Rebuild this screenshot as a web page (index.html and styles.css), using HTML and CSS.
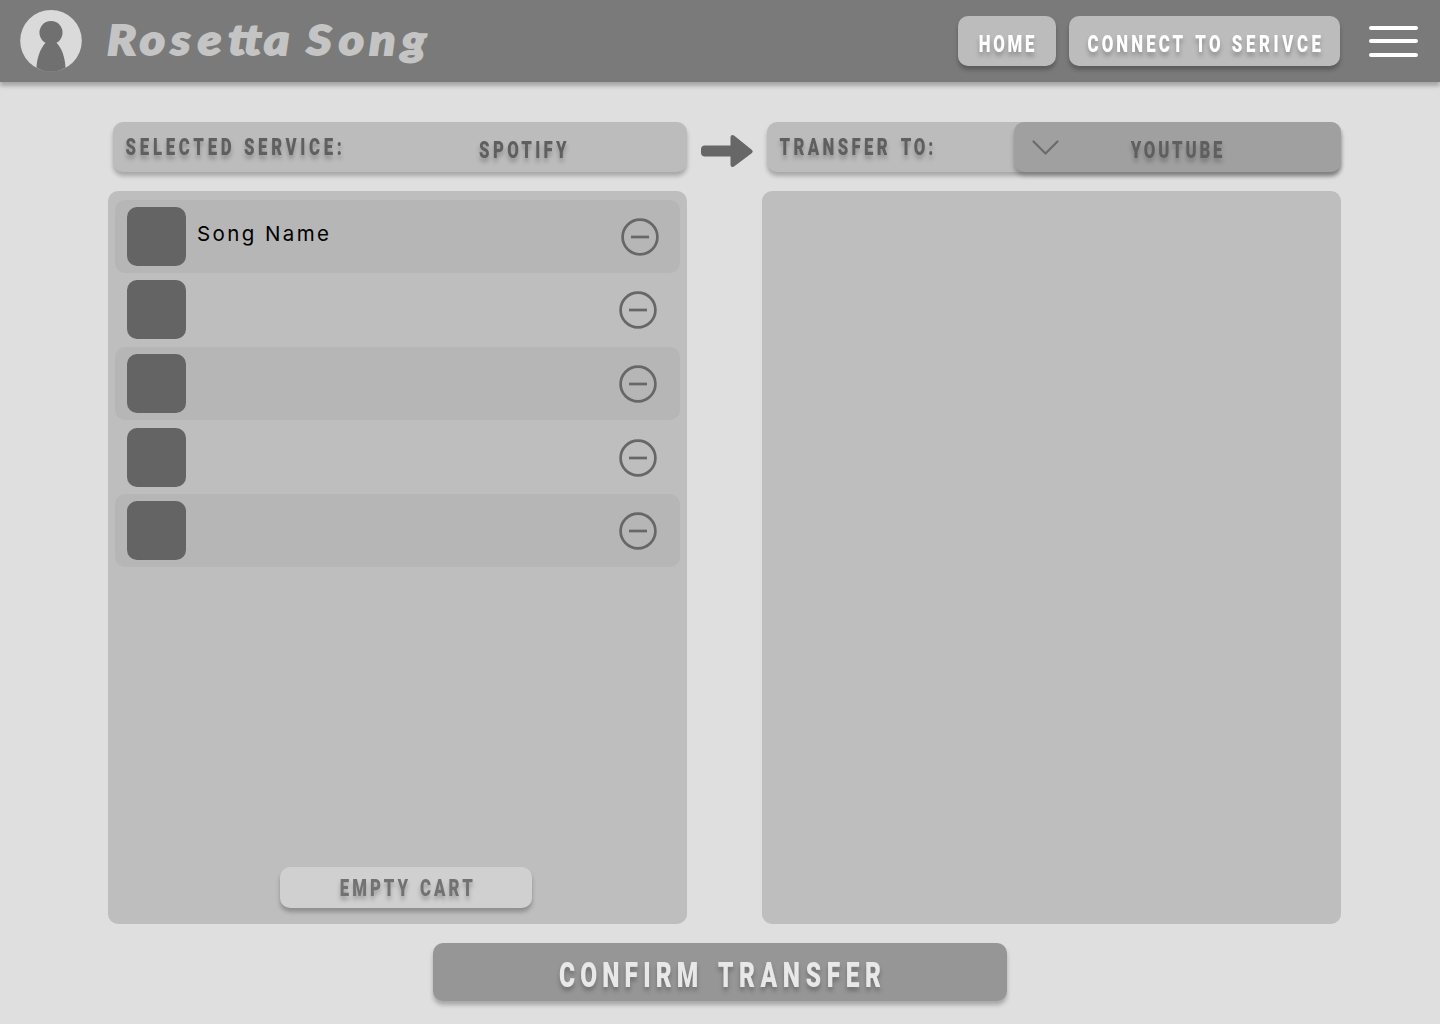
FILE: index.html
```html
<!DOCTYPE html>
<html lang="en">
<head>
<meta charset="utf-8">
<title>Rosetta Song</title>
<link rel="stylesheet" href="styles.css">
</head>
<body>
<header class="topbar">
  <svg class="logo" width="62" height="62" viewBox="0 0 62 62"><circle cx="31" cy="30.700" r="30.800" fill="#dadada"/><path d="M25.500 32.800A11.600 11.600 0 1 1 36.500 32.800C42.500 39 45 48 45.500 57.800A30.800 30.800 0 0 1 16.500 57.800C17 48 20 39 25.500 32.800Z" fill="#707070"/></svg>
  <svg class="brand" width="330" height="62"><text y="45" transform="scale(1.15 1)" x="0 28.500 55.500 79 105.500 119 136.500 148 173.500 201.500 228 256">Rosetta Song</text></svg>
  <nav class="nav">
    <a class="button home"><svg class="label" width="98" height="50"><text y="36" transform="scale(.7 1)"><tspan x="29.500" textLength="79.500">HOME</tspan></text></svg></a>
    <a class="button connect"><svg class="label" width="271" height="50"><text y="36" transform="scale(.7 1)"><tspan x="26.500" textLength="136.500">CONNECT</tspan><tspan x="180.500" textLength="36">TO</tspan><tspan x="232.500" textLength="127.500">SERIVCE</tspan></text></svg></a>
  </nav>
  <svg class="menu" width="49" height="32" viewBox="0 0 49 32"><path d="M2 3H47M2 16H47M2 30H47" stroke="#fff" stroke-width="4" stroke-linecap="round"/></svg>
</header>
<main class="page">
  <section class="services">
    <div class="button service"><svg class="label" width="574" height="50"><text y="33" transform="scale(.7 1)"><tspan x="18" textLength="151.500">SELECTED</tspan><tspan x="187" textLength="140">SERVICE:</tspan></text><text y="36" transform="scale(.7 1)"><tspan x="523" textLength="125">SPOTIFY</tspan></text></svg></div>
    <svg class="arrow" width="52" height="34" viewBox="0 0 52 34"><path d="M4 11.500H29.500V3Q30 0 33 1.500L51 16Q52.500 17.500 51 19L33 32.500Q30 34 29.500 31V22.500H4Q0 22.500 0 18.500V15.500Q0 11.500 4 11.500Z" fill="#676767"/></svg>
    <div class="button service target"><svg class="label" width="247" height="50"><text y="33" transform="scale(.7 1)"><tspan x="18" textLength="154.500">TRANSFER</tspan><tspan x="191" textLength="46.500">TO:</tspan></text></svg>
      <div class="button select">
        <svg class="chevron" width="27" height="15" viewBox="0 0 27 15"><path d="M1.500 1.500L13.500 13.500L25.500 1.500" fill="none" stroke="#6b6b6b" stroke-width="2.200" stroke-linecap="round" stroke-linejoin="round"/></svg>
        <svg class="label" width="110" height="50"><text y="36" transform="scale(.7 1)"><tspan x="1" textLength="131">YOUTUBE</tspan></text></svg>
      </div>
    </div>
  </section>
  <section class="panels">
    <div class="panel cart">
      <div class="songs">
        <div class="song"><i class="cover"></i><span class="name">Song Name</span><svg class="remove" width="38" height="38" viewBox="0 0 38 38"><circle cx="19" cy="19" r="17.400"/><path d="M10 19H28"/></svg></div>
        <div class="song"><i class="cover"></i><svg class="remove" width="38" height="38" viewBox="0 0 38 38"><circle cx="19" cy="19" r="17.400"/><path d="M10 19H28"/></svg></div>
        <div class="song"><i class="cover"></i><svg class="remove" width="38" height="38" viewBox="0 0 38 38"><circle cx="19" cy="19" r="17.400"/><path d="M10 19H28"/></svg></div>
        <div class="song"><i class="cover"></i><svg class="remove" width="38" height="38" viewBox="0 0 38 38"><circle cx="19" cy="19" r="17.400"/><path d="M10 19H28"/></svg></div>
        <div class="song"><i class="cover"></i><svg class="remove" width="38" height="38" viewBox="0 0 38 38"><circle cx="19" cy="19" r="17.400"/><path d="M10 19H28"/></svg></div>
      </div>
      <div class="button empty"><svg class="label" width="252" height="41"><text y="29" transform="scale(.7 1)"><tspan x="85.500" textLength="97.500">EMPTY</tspan><tspan x="200" textLength="75.500">CART</tspan></text></svg></div>
    </div>
    <div class="panel"></div>
  </section>
  <div class="button confirm"><svg class="label" width="574" height="58"><text y="44" transform="scale(.7 1)"><tspan x="180" textLength="199">CONFIRM</tspan><tspan x="407" textLength="233">TRANSFER</tspan></text></svg></div>
</main>
</body>
</html>
```
FILE: styles.css
```css
* { box-sizing: border-box; }
body { margin: 0; height: 1024px; overflow: hidden; background: #dfdfdf; font-family: Inter, sans-serif; }
svg { display: block; flex: none; overflow: visible; }
.topbar { display: flex; align-items: flex-start; height: 82px; padding: 10px 22px 0 20px; background: #7a7a7a; box-shadow: 0 4px 4px rgba(0,0,0,.25); }
.brand { margin-left: 25px; font: italic 900 42px Lato, sans-serif; fill: #c4c4c4; stroke: #c4c4c4; stroke-width: 1.8px; }
.nav { display: flex; gap: 13px; margin: 6px 29px 0 auto; }
.menu { margin-top: 15px; }
.button { border-radius: 10px; background: #bcbcbc; box-shadow: 0 4px 4px rgba(0,0,0,.25); }
.home { width: 98px; height: 50px; }
.connect { width: 271px; height: 50px; }
.label { font: 900 24px Roboto, sans-serif; fill: #fff; filter: drop-shadow(0 4px 2px rgba(0,0,0,.25)); }
.page { padding: 40px 99px 0 108px; }
.services { display: flex; align-items: flex-start; justify-content: space-between; padding-left: 5px; }
.service { width: 574px; height: 50px; }
.services .label { fill: #5f5f5f; }
.arrow { margin-top: 12px; }
.target { display: flex; }
.select { display: flex; width: 327px; height: 50px; padding-left: 18px; background: #a0a0a0; }
.chevron { margin: 18px 71px 0 0; }
.panels { display: flex; justify-content: space-between; margin-top: 19px; }
.panel { width: 579px; height: 733px; border-radius: 10px; background: #bebebe; }
.cart { display: flex; flex-direction: column; justify-content: space-between; padding: 9px 7px 16px; }
.songs { display: grid; grid-template-rows: 73px 74px 74px 73px 73px; }
.song { display: flex; align-items: center; height: 73px; padding: 0 23px 0 12px; border-radius: 10px; }
.song:nth-child(odd) { background: #b6b6b6; }
.song:first-child { padding-right: 21px; }
.cover { width: 59px; height: 59px; border-radius: 10px; background: #646464; }
.name { margin: -6px 0 0 11px; font-size: 20.5px; letter-spacing: 2.4px; line-height: 24px; color: #000; }
.remove { margin-left: auto; fill: none; stroke: #676767; stroke-width: 2.7px; }
.empty { width: 252px; height: 41px; margin-left: 165px; background: #d0d0d0; }
.empty .label { fill: #727272; }
.confirm { width: 574px; height: 58px; margin: 19px 0 0 325px; background: #969696; }
.confirm .label { font-size: 35px; fill: #e8e8e8; }
```
